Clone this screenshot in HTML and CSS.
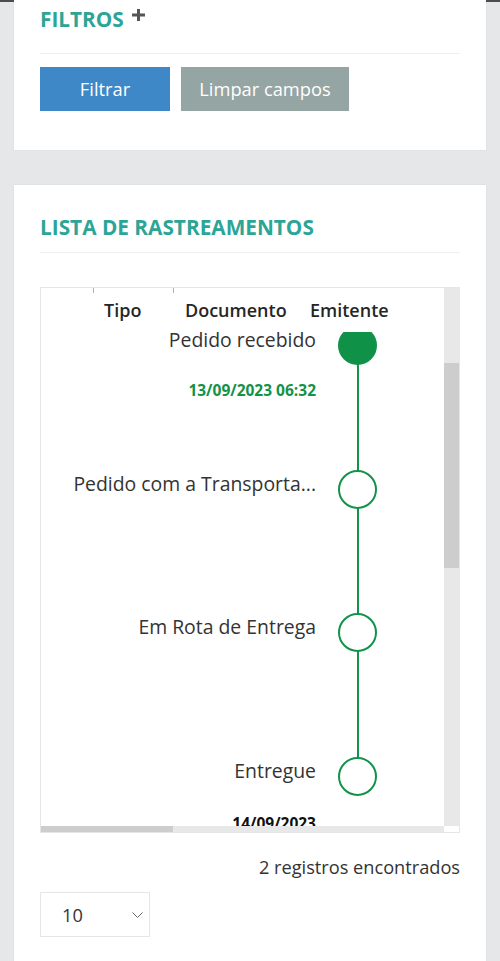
FILE: index.html
```html
<!DOCTYPE html>
<html>
<head>
<meta charset="UTF-8">
<meta name="viewport" content="width=device-width, initial-scale=1.0">
<title>Rastreamentos</title>
<link rel="stylesheet" href="styles.css">
</head>
<body>

<div class="top-line"></div>

<div class="card card-filters">
    <h2 class="card-title">FILTROS
        <svg class="plus" width="13" height="12" viewBox="0 0 13 12"><path d="M5 0h3v4.5h5v3H8V12H5V7.5H0v-3h5z" fill="#555"/></svg>
    </h2>
    <hr class="divider">
    <div class="button-row">
        <a href="#" class="btn btn-blue">Filtrar</a>
        <a href="#" class="btn btn-gray">Limpar campos</a>
    </div>
</div>

<div class="card card-list">
    <h2 class="card-title title-list">LISTA DE RASTREAMENTOS</h2>
    <hr class="divider divider-list">

    <div class="table-box">
        <div class="table-view">
            <div class="table-head">
                <div class="th th-blank"></div>
                <div class="th th-tick th-tipo">Tipo</div>
                <div class="th th-tick th-doc">Documento</div>
                <div class="th th-emit">Emitente</div>
            </div>
            <div class="timeline">
                <div class="step">
                    <div class="step-text">
                        <div class="step-label">Pedido recebido</div>
                        <div class="step-date green">13/09/2023 06:32</div>
                    </div>
                    <div class="step-mark"><span class="dot dot-full"></span></div>
                </div>
                <div class="step">
                    <div class="step-text">
                        <div class="step-label">Pedido com a Transporta...</div>
                    </div>
                    <div class="step-mark"><span class="dot"></span></div>
                </div>
                <div class="step">
                    <div class="step-text">
                        <div class="step-label">Em Rota de Entrega</div>
                    </div>
                    <div class="step-mark"><span class="dot"></span></div>
                </div>
                <div class="step">
                    <div class="step-text">
                        <div class="step-label">Entregue</div>
                        <div class="step-date black">14/09/2023</div>
                    </div>
                    <div class="step-mark"><span class="dot"></span></div>
                </div>
            </div>
            <div class="hscroll"><div class="hscroll-thumb"></div></div>
        </div>
        <div class="vscroll">
            <div class="vscroll-thumb"></div>
            <div class="vscroll-corner"></div>
        </div>
    </div>

    <p class="count">2 registros encontrados</p>

    <div class="page-size">
        <span>10</span>
        <svg width="11" height="6" viewBox="0 0 11 6"><path d="M0.5 0.5l5 5 5-5" fill="none" stroke="#666" stroke-width="1"/></svg>
    </div>
</div>

</body>
</html>
```

FILE: styles.css
```css
body, html {
    margin: 0;
    padding: 0;
    background-color: #e6e7e9;
    font-family: "Open Sans", Arial, sans-serif;
    color: #333;
}

.top-line {
    height: 2px;
    background-color: #4d4d4d;
}

.card {
    background-color: #fff;
    margin: 0 14px;
    padding: 0 26px;
    box-shadow: 0 0 1px rgba(0, 0, 0, 0.12);
}

.card-filters {
    margin-top: -2px;
    padding-top: 5px;
    padding-bottom: 39px;
}

.card-list {
    margin-top: 35px;
    padding-top: 28px;
    padding-bottom: 30px;
}

.card-title {
    margin: 0;
    font-size: 20.8px;
    line-height: 28px;
    font-weight: 700;
    color: #2ca597;
}

.plus {
    vertical-align: 6px;
    margin-left: 3px;
}

.divider {
    border: 0;
    border-top: 1px solid #eee;
    margin: 20px 0 0;
}

.divider-list {
    margin-top: 11px;
}

.button-row {
    display: flex;
    gap: 11px;
    margin-top: 13px;
}

.btn {
    display: block;
    height: 44px;
    line-height: 44px;
    font-size: 18.3px;
    color: #fff;
    text-align: center;
    text-decoration: none;
}

.btn-blue {
    width: 130px;
    background-color: #3f88c8;
}

.btn-gray {
    width: 168px;
    background-color: #95a5a4;
}

.table-box {
    margin-top: 34px;
    border: 1px solid #e6e6e6;
    height: 544px;
    display: flex;
}

.table-view {
    flex: 1;
    display: flex;
    flex-direction: column;
    overflow: hidden;
}

.table-head {
    display: flex;
    height: 44px;
    padding-top: 10px;
    box-sizing: border-box;
    background-color: #fff;
    position: relative;
    z-index: 1;
}

.th {
    box-sizing: border-box;
    padding: 0 11px;
    font-size: 18px;
    line-height: 24px;
    font-weight: 600;
    color: #262626;
    white-space: nowrap;
}

.th-blank {
    width: 52px;
}

.th-tick {
    margin-top: -10px;
    padding-top: 10px;
    background: linear-gradient(#7fc6bd, #7fc6bd) left top / 1px 5px no-repeat;
}

.th-tipo {
    width: 80px;
}

.th-doc {
    width: 125px;
    padding-left: 12px;
}

.th-emit {
    padding-left: 12px;
}

.timeline {
    flex: 1;
    overflow: hidden;
}

.step {
    display: flex;
    height: 143.5px;
}

.step:first-child {
    margin-top: -6px;
}

.step-text {
    width: 275px;
    text-align: right;
    padding-top: 2px;
}

.step-label {
    font-size: 19.4px;
    line-height: 24px;
    color: #333;
    white-space: nowrap;
}

.step-date {
    margin-top: 29px;
    font-size: 15.5px;
    line-height: 18px;
    font-weight: 700;
}

.step-date.green {
    color: #13924a;
}

.step-date.black {
    margin-top: 31px;
    color: #111;
}

.step-mark {
    width: 39px;
    margin-left: 22px;
    background: linear-gradient(#13924a, #13924a) center top / 2px 100% no-repeat;
}

.step:last-child .step-mark {
    background: none;
}

.dot {
    display: block;
    width: 39px;
    height: 39px;
    box-sizing: border-box;
    border: 2.5px solid #13924a;
    border-radius: 50%;
    background-color: #fff;
}

.dot-full {
    background-color: #0f9148;
}

.hscroll {
    height: 6px;
    background-color: #e8e8e8;
    position: relative;
    z-index: 1;
}

.hscroll-thumb {
    width: 132px;
    height: 100%;
    background-color: #cdcdcd;
}

.vscroll {
    width: 15px;
    display: flex;
    flex-direction: column;
    background-color: #e8e8e8;
}

.vscroll-thumb {
    margin-top: 75px;
    height: 205px;
    background-color: #cdcdcd;
}

.vscroll-corner {
    margin-top: auto;
    height: 6px;
    background-color: #fff;
}

.count {
    margin: 22px 0 0;
    text-align: right;
    font-size: 18.2px;
    line-height: 24px;
    color: #333;
}

.page-size {
    margin-top: 13px;
    width: 110px;
    height: 45px;
    box-sizing: border-box;
    border: 1px solid #e6e6e6;
    display: flex;
    align-items: center;
    justify-content: space-between;
    padding: 0 6px 0 21px;
    font-size: 18.2px;
}
```
